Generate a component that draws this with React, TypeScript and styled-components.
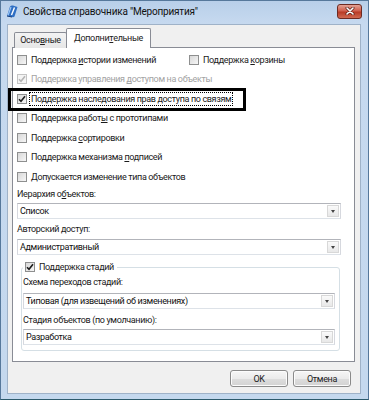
import React from 'react'
import styled, { createGlobalStyle } from 'styled-components'

const GlobalStyle = createGlobalStyle`
  html, body {
    margin: 0;
    padding: 0;
    background: #ffffff;
  }
  body {
    font-family: Roboto, "Liberation Sans", sans-serif;
    color: #000;
  }
`

const Window = styled.div`
  position: relative;
  box-sizing: border-box;
  width: 369px;
  height: 400px;
  display: flex;
  flex-direction: column;
  padding: 0 7px 5px 6px;
  border: 1px solid #56789b;
  border-bottom-color: #2c5a6c;
  background: linear-gradient(#b8cfe9, #c6d9ef 22px, #c4d8ee);
`

const TitleBar = styled.div`
  height: 23px;
  margin: 0 -7px 0 -6px;
  padding: 0 6px 3px 4px;
  box-sizing: border-box;
  display: flex;
  align-items: center;
  gap: 4px;
`

const Caption = styled.div`
  flex: 1;
  font-size: 10px;
  letter-spacing: -0.2px;
  color: #111;
  white-space: nowrap;
`

const CloseButton = styled.div`
  width: 25px;
  height: 15px;
  box-sizing: border-box;
  border: 1px solid #6d2a22;
  border-radius: 3px;
  background: linear-gradient(#e3a295, #cf5f4d 45%, #b83b26 55%, #d06a52);
  display: flex;
  align-items: center;
  justify-content: center;
`

const Body = styled.div`
  flex: 1;
  display: flex;
  flex-direction: column;
  background: #f0f0f0;
  border: 1px solid #9fb2c8;
  padding: 3px 5px 0 4px;
  font-size: 9px;
  letter-spacing: -0.35px;
`

const TabStrip = styled.div`
  height: 20px;
  margin-bottom: -1px;
  padding-left: 2px;
  display: flex;
  align-items: flex-end;
`

const Tab = styled.div<{ $active?: boolean; $width: number }>`
  position: relative;
  box-sizing: border-box;
  width: ${p => p.$width}px;
  height: ${p => (p.$active ? 20 : 16)}px;
  margin-left: ${p => (p.$active ? -1 : 0)}px;
  border: 1px solid #898c95;
  border-bottom: none;
  border-radius: 2px 2px 0 0;
  background: ${p => (p.$active ? '#ffffff' : 'linear-gradient(#f3f3f3, #e6e6e6)')};
  z-index: ${p => (p.$active ? 1 : 0)};
  display: flex;
  align-items: center;
  justify-content: center;
  padding-bottom: ${p => (p.$active ? 2 : 1)}px;
  color: #222;
`

const Panel = styled.div`
  height: 315px;
  box-sizing: border-box;
  background: #ffffff;
  border: 1px solid #898c95;
  padding: 2px 13px 0 4px;
  display: flex;
  flex-direction: column;
`

const CheckList = styled.div`
  display: grid;
  grid-auto-rows: 19.5px;
`

const CheckRow = styled.div`
  display: flex;
  align-items: center;
`

const CheckItem = styled.div<{ $width?: number; $disabled?: boolean }>`
  display: flex;
  align-items: center;
  gap: 4px;
  width: ${p => (p.$width ? `${p.$width}px` : 'auto')};
  color: ${p => (p.$disabled ? '#a3a3a3' : '#1a1a1a')};
  white-space: nowrap;
`

const Box = styled.div<{ $disabled?: boolean }>`
  width: 10px;
  height: 10px;
  box-sizing: border-box;
  flex: none;
  border: 1px solid ${p => (p.$disabled ? '#c4c4c4' : '#8e8f8f')};
  background: ${p =>
    p.$disabled
      ? '#f4f4f4'
      : 'linear-gradient(135deg, #d8d8d8, #f6f6f6)'};
  display: flex;
  align-items: center;
  justify-content: center;
`

const CheckText = styled.span<{ $focused?: boolean }>`
  line-height: 12px;
  outline: ${p => (p.$focused ? '1px dotted #000' : 'none')};
  outline-offset: 0;
  padding: 0 1px;
  margin-left: -1px;
`

const Key = styled.span`
  text-decoration: underline;
  text-underline-offset: 1px;
`

const FieldLabel = styled.div<{ $gap?: number }>`
  height: 14px;
  line-height: 14px;
  margin-top: ${p => p.$gap ?? 0}px;
  color: #1a1a1a;
  white-space: nowrap;
`

const Select = styled.div<{ $gap: number }>`
  height: 16px;
  margin-top: ${p => p.$gap}px;
  box-sizing: border-box;
  display: flex;
  border: 1px solid #b2b4ba;
  border-left-color: #d6d8de;
  border-right-color: #d6d8de;
  border-bottom-color: #dde2e8;
  background: #ffffff;
`

const SelectValue = styled.div`
  flex: 1;
  padding-left: 2px;
  line-height: 14px;
  color: #111;
  white-space: nowrap;
  overflow: hidden;
`

const DropButton = styled.div`
  width: 12px;
  flex: none;
  margin: 1px;
  border: 1px solid #d8d8d8;
  box-sizing: border-box;
  background: linear-gradient(#fafafa, #e8e8e8);
  display: flex;
  align-items: center;
  justify-content: center;
`

const Arrow = styled.div`
  width: 0;
  height: 0;
  border-left: 2.5px solid transparent;
  border-right: 2.5px solid transparent;
  border-top: 3px solid #444;
`

const Group = styled.fieldset`
  margin: 5px 1px 0 4px;
  padding: 1px 4px 5px 1px;
  border: 1px solid #d5dfe5;
  border-radius: 3px;
  box-shadow: inset 1px 1px 0 #fff;
  min-width: 0;
`

const Legend = styled.legend`
  padding: 0 3px 0 2px;
  height: 14px;
  display: flex;
  align-items: center;
  gap: 4px;
  color: #1a1a1a;
`

const ButtonRow = styled.div`
  display: flex;
  justify-content: flex-end;
  gap: 5px;
  padding: 8px 4px 0 0;
`

const Button = styled.div`
  width: 58px;
  height: 17px;
  box-sizing: border-box;
  border: 1px solid #8a8a8a;
  border-radius: 3px;
  background: linear-gradient(#f6f6f6, #ebebeb 50%, #dddddd 51%, #d2d2d2);
  box-shadow: inset 0 0 0 1px #fcfcfc;
  display: flex;
  align-items: center;
  justify-content: center;
  color: #222;
`

const Callout = styled.div`
  position: absolute;
  left: 7px;
  top: 87px;
  width: 238px;
  height: 23px;
  box-sizing: border-box;
  border: 3px solid #000;
  pointer-events: none;
`

const CheckMark = ({ disabled }: { disabled?: boolean }) => (
  <svg width="8" height="8" viewBox="0 0 8 8">
    <path
      d="M1 4.2 L3 6.3 L7 1.2"
      fill="none"
      stroke={disabled ? '#b5b5b5' : '#1c1c1c'}
      strokeWidth="1.6"
    />
  </svg>
)

type CheckProps = {
  checked?: boolean
  disabled?: boolean
  focused?: boolean
  width?: number
  children: React.ReactNode
}

const Check = ({ checked, disabled, focused, width, children }: CheckProps) => (
  <CheckItem $width={width} $disabled={disabled}>
    <Box $disabled={disabled}>{checked && <CheckMark disabled={disabled} />}</Box>
    <CheckText $focused={focused}>{children}</CheckText>
  </CheckItem>
)

const Combo = ({ value, gap }: { value: string; gap: number }) => (
  <Select $gap={gap}>
    <SelectValue>{value}</SelectValue>
    <DropButton>
      <Arrow />
    </DropButton>
  </Select>
)

const BookIcon = () => (
  <svg width="14" height="14" viewBox="0 0 14 14">
    <path d="M2 12 L5 2.5 Q6 1 8 1.5 L12.5 3 L9.5 12.5 Q8.5 13.5 7 13 Z" fill="#2f6fc4" />
    <path d="M3 11.5 L6 3" stroke="#9cc7f5" strokeWidth="1.2" />
    <path d="M6.5 11 L9.5 3.5" stroke="#ffffff" strokeWidth="1.4" />
    <path d="M2 12 L7 13" stroke="#173f7a" strokeWidth="1" />
  </svg>
)

const CloseGlyph = () => (
  <svg width="10" height="8" viewBox="0 0 10 8">
    <path d="M2 1 L8 7 M8 1 L2 7" stroke="#5a1f18" strokeWidth="3" strokeLinecap="round" />
    <path d="M2 1 L8 7 M8 1 L2 7" stroke="#ffffff" strokeWidth="1.6" strokeLinecap="round" />
  </svg>
)

const App = () => {
  return (
    <>
      <GlobalStyle />
      <Window>
        <TitleBar>
          <BookIcon />
          <Caption>Свойства справочника "Мероприятия"</Caption>
          <CloseButton>
            <CloseGlyph />
          </CloseButton>
        </TitleBar>
        <Body>
          <TabStrip>
            <Tab $width={53}>
              Осно<Key>в</Key>ные
            </Tab>
            <Tab $active $width={85}>
              Дополни<Key>т</Key>ельные
            </Tab>
          </TabStrip>
          <Panel>
            <CheckList>
              <CheckRow>
                <Check width={172}>
                  Поддержка <Key>и</Key>стории изменений
                </Check>
                <Check>
                  Поддержка <Key>к</Key>орзины
                </Check>
              </CheckRow>
              <CheckRow>
                <Check checked disabled>
                  Поддержка управления <Key>д</Key>оступом на объекты
                </Check>
              </CheckRow>
              <CheckRow>
                <Check checked focused>
                  Поддержка наследования прав доступа по связям
                </Check>
              </CheckRow>
              <CheckRow>
                <Check>
                  Поддержка работ<Key>ы</Key> с прототипами
                </Check>
              </CheckRow>
              <CheckRow>
                <Check>
                  Поддержка <Key>с</Key>ортировки
                </Check>
              </CheckRow>
              <CheckRow>
                <Check>
                  Поддержка механизма <Key>п</Key>одписей
                </Check>
              </CheckRow>
              <CheckRow>
                <Check>
                  <Key>Д</Key>опускается изменение типа объектов
                </Check>
              </CheckRow>
            </CheckList>
            <FieldLabel>
              Иерархия о<Key>б</Key>ъектов:
            </FieldLabel>
            <Combo value="Список" gap={2.5} />
            <FieldLabel $gap={3}>Авторский доступ:</FieldLabel>
            <Combo value="Административный" gap={3} />
            <Group>
              <Legend>
                <Box>
                  <CheckMark />
                </Box>
                Поддержка стадий
              </Legend>
              <FieldLabel>Схема переходов стадий:</FieldLabel>
              <Combo value="Типовая (для извещений об изменениях)" gap={4} />
              <FieldLabel $gap={4}>Стадия объектов (по умолчанию):</FieldLabel>
              <Combo value="Разработка" gap={2} />
            </Group>
          </Panel>
          <ButtonRow>
            <Button>OK</Button>
            <Button>Отмена</Button>
          </ButtonRow>
        </Body>
        <Callout />
      </Window>
    </>
  )
}

export default App
